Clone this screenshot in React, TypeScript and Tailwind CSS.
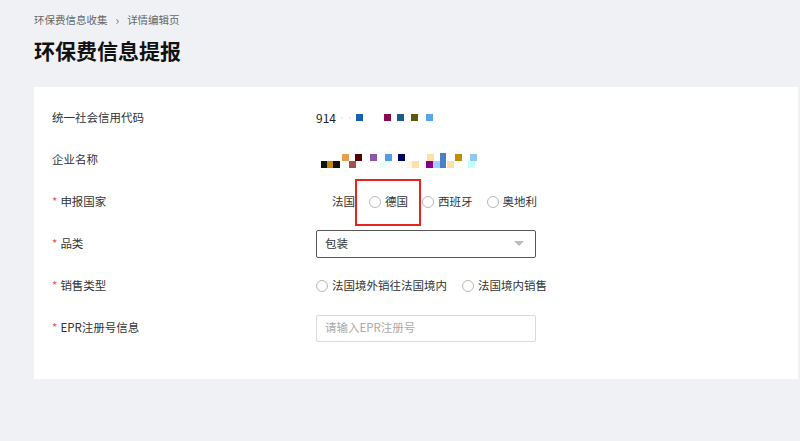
import React from "react";

const font = { fontFamily: '"Noto Sans CJK SC", "Noto Sans", sans-serif' };

function Radio({ label, hidden }: { label: string; hidden?: boolean }) {
  return (
    <label className="flex items-center gap-[4px]">
      <span
        className={
          "inline-block w-[12px] h-[12px] rounded-full border bg-white " +
          (hidden ? "border-white" : "border-[#b8b8b8]")
        }
      />
      <span>{label}</span>
    </label>
  );
}

const row1 = [
  [356, "#1a5fb4"],
  [384, "#8a0a50"],
  [397, "#1d5b8a"],
  [411, "#5b5b10"],
  [426, "#5aa7e8"],
] as const;

const mosaic: [number, number, number, string][] = [
  [321, 160, 7, "#111111"],
  [327, 160, 7, "#c8860a"],
  [333, 160, 7, "#111111"],
  [349, 160, 7, "#a05050"],
  [342, 153, 7, "#e8a050"],
  [355, 153, 7, "#5a0000"],
  [370, 153, 7, "#8a5aaa"],
  [385, 153, 7, "#4aa0e0"],
  [398, 153, 7, "#000060"],
  [380, 160, 7, "#e6ffff"],
  [407, 160, 7, "#fff6e0"],
  [412, 160, 7, "#ffe0a8"],
  [427, 153, 7, "#ffe0a8"],
  [426, 160, 7, "#8b008b"],
  [433, 160, 7, "#a0d0ff"],
  [447, 160, 7, "#ffe0a8"],
  [455, 153, 7, "#c88a00"],
  [470, 153, 7, "#90c8f0"],
  [468, 160, 7, "#c0ffff"],
];

export default function App() {
  return (
    <div
      className="w-[800px] h-[441px] bg-[#f0f1f5] overflow-hidden text-[#333]"
      style={font}
    >
      <div className="pl-[34px] pt-[12px]">
        <div className="flex items-center text-[10.5px] text-[#666] h-[16px]">
          <span>环保费信息收集</span>
          <span className="mx-[8px] text-[#777] text-[12px]">›</span>
          <span>详情编辑页</span>
        </div>
        <div className="mt-[8px] text-[21px] font-bold text-[#111] leading-[28px]">
          环保费信息提报
        </div>
      </div>
      <div className="ml-[34px] mt-[23px] w-[764px] bg-white pt-[10px] pb-[30px] text-[11.5px]">
        {/* row 1 */}
        <div className="flex items-center h-[42px]">
          <div className="w-[282px] pl-[18px]">统一社会信用代码</div>
          <div className="flex items-center">
            <span className="text-[#222] text-[12px]">914</span>
            <span className="text-[#ddd] text-[8px] ml-[2px]">···</span>
            <svg width="130" height="10" className="-ml-[16px]">
              {row1.map(([x, c]) => (
                <rect key={x} x={x - 346} y={1} width={7} height={7} fill={c} />
              ))}
            </svg>
          </div>
        </div>
        {/* row 2 */}
        <div className="flex items-center h-[42px]">
          <div className="w-[282px] pl-[18px]">企业名称</div>
          <svg width="170" height="18">
            {mosaic.map(([x, y, s, c], i) => (
              <rect key={i} x={x - 316} y={y - 150} width={s} height={s} fill={c} />
            ))}
            <rect x={440 - 316} y={2} width={6} height={15} fill="#4a80c8" />
          </svg>
        </div>
        {/* row 3 */}
        <div className="flex items-center h-[42px]">
          <div className="w-[282px] pl-[18px]">
            <span className="text-[#f0505a] mr-[3px]">*</span>申报国家
          </div>
          <div className="relative flex items-center gap-[14px]">
            <Radio label="法国" hidden />
            <Radio label="德国" />
            <Radio label="西班牙" />
            <Radio label="奥地利" />
            <div className="absolute left-[39px] top-[-14px] w-[66px] h-[47px] border-2 border-[#e8251c]" />
          </div>
        </div>
        {/* row 4 */}
        <div className="flex items-center h-[42px]">
          <div className="w-[282px] pl-[18px]">
            <span className="text-[#f0505a] mr-[3px]">*</span>品类
          </div>
          <div className="w-[220px] h-[28px] border border-[#555] rounded-[2px] flex items-center justify-between px-[8px]">
            <span>包装</span>
            <svg width="10" height="6" className="mr-[3px]">
              <path d="M0 0 L10 0 L5 5 Z" fill="#bbb" />
            </svg>
          </div>
        </div>
        {/* row 5 */}
        <div className="flex items-center h-[42px]">
          <div className="w-[282px] pl-[18px]">
            <span className="text-[#f0505a] mr-[3px]">*</span>销售类型
          </div>
          <div className="flex items-center gap-[15px]">
            <Radio label="法国境外销往法国境内" />
            <Radio label="法国境内销售" />
          </div>
        </div>
        {/* row 6 */}
        <div className="flex items-center h-[42px]">
          <div className="w-[282px] pl-[18px]">
            <span className="text-[#f0505a] mr-[3px]">*</span>EPR注册号信息
          </div>
          <div className="w-[220px] h-[27px] border border-[#d9d9d9] rounded-[2px] flex items-center px-[8px] text-[#aaa]">
            请输入EPR注册号
          </div>
        </div>
      </div>
    </div>
  );
}
